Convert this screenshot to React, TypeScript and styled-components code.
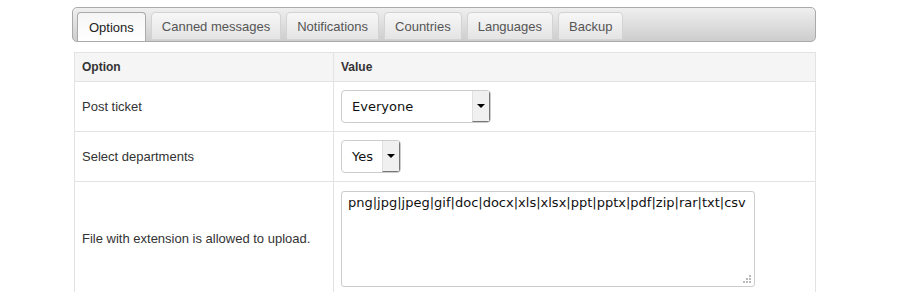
import { createGlobalStyle } from "styled-components";
import styled from "styled-components";

const GlobalStyle = createGlobalStyle`
  body {
    margin: 0;
    background: #fff;
    font-family: "Liberation Sans", Arial, sans-serif;
    color: #333;
  }
`;

const Page = styled.div`
  width: 744px;
  margin-left: 72px;
  padding-top: 7px;
`;

const TabBar = styled.ul`
  display: flex;
  gap: 5px;
  margin: 0;
  padding: 4px 0 0 4px;
  height: 29px;
  list-style: none;
  border: 1px solid #aaa;
  border-radius: 5px;
  background: linear-gradient(#efefef, #cdcdcd);
`;

const Tab = styled.li<{ $active?: boolean }>`
  height: ${(p) => (p.$active ? 29 : 28)}px;
  box-sizing: border-box;
  padding: 0 ${(p) => (p.$active ? 11 : 10)}px;
  display: flex;
  align-items: center;
  font-size: 13px;
  color: ${(p) => (p.$active ? "#222" : "#555")};
  border: 1px solid ${(p) => (p.$active ? "#aaa" : "#d3d3d3")};
  border-bottom: ${(p) => (p.$active ? "none" : "1px solid #d3d3d3")};
  border-radius: 4px 4px 0 0;
  background: ${(p) =>
    p.$active ? "linear-gradient(#f5f5f5, #fff)" : "linear-gradient(#f7f7f7, #e4e4e4)"};
`;

const Table = styled.table`
  width: 742px;
  margin: 10px 0 0 2px;
  border-collapse: collapse;
  font-size: 13px;
`;

const HeadCell = styled.th<{ $w?: number }>`
  text-align: left;
  font-size: 12px;
  font-weight: bold;
  color: #333;
  background: #f5f5f5;
  height: 28px;
  padding: 0 7px;
  border: 1px solid #e3e3e3;
  width: ${(p) => (p.$w ? `${p.$w}px` : "auto")};
`;

const Cell = styled.td<{ $h: number }>`
  height: ${(p) => p.$h}px;
  padding: 0 7px;
  border: 1px solid #e3e3e3;
  vertical-align: middle;
  color: #333;
`;

const Select = styled.div<{ $w: number; $h: number }>`
  display: flex;
  width: ${(p) => p.$w}px;
  height: ${(p) => p.$h}px;
  box-sizing: border-box;
  border: 1px solid #ccc;
  border-radius: 4px;
  overflow: hidden;
  background: #fff;
`;

const SelectText = styled.span`
  flex: 1;
  display: flex;
  align-items: center;
  padding-left: 10px;
  font-family: "DejaVu Sans", Verdana, sans-serif;
  font-size: 13px;
  color: #111;
`;

const Arrow = styled.span`
  width: 16px;
  display: flex;
  align-items: center;
  justify-content: center;
  background: #f0f0f0;
  border-left: 1px solid #e0e0e0;
  border-right: 1px solid #777;
  border-bottom: 1px solid #777;
  &::after {
    content: "";
    border-left: 4px solid transparent;
    border-right: 4px solid transparent;
    border-top: 4px solid #000;
  }
`;

const TextArea = styled.div`
  position: relative;
  width: 414px;
  height: 96px;
  box-sizing: border-box;
  border: 1px solid #ccc;
  border-radius: 3px;
  padding: 3px 6px;
  font-family: "DejaVu Sans", Verdana, sans-serif;
  font-size: 13px;
  color: #111;
`;

const Grip = styled.svg`
  position: absolute;
  right: 2px;
  bottom: 2px;
`;

export default function App() {
  const tabs = ["Options", "Canned messages", "Notifications", "Countries", "Languages", "Backup"];
  return (
    <Page>
      <GlobalStyle />
      <TabBar>
        {tabs.map((t, i) => (
          <Tab key={t} $active={i === 0}>
            {t}
          </Tab>
        ))}
      </TabBar>
      <Table>
        <thead>
          <tr>
            <HeadCell $w={244}>Option</HeadCell>
            <HeadCell>Value</HeadCell>
          </tr>
        </thead>
        <tbody>
          <tr>
            <Cell $h={49}>Post ticket</Cell>
            <Cell $h={49}>
              <Select $w={150} $h={33}>
                <SelectText>Everyone</SelectText>
                <Arrow />
              </Select>
            </Cell>
          </tr>
          <tr>
            <Cell $h={49}>Select departments</Cell>
            <Cell $h={49}>
              <Select $w={60} $h={33}>
                <SelectText>Yes</SelectText>
                <Arrow />
              </Select>
            </Cell>
          </tr>
          <tr>
            <Cell $h={113}>File with extension is allowed to upload.</Cell>
            <Cell $h={113}>
              <TextArea>
                png|jpg|jpeg|gif|doc|docx|xls|xlsx|ppt|pptx|pdf|zip|rar|txt|csv
                <Grip width="10" height="10" viewBox="0 0 10 10">
                  <rect x="7" y="1" width="2" height="2" fill="#bbb" />
                  <rect x="4" y="4" width="2" height="2" fill="#bbb" />
                  <rect x="7" y="4" width="2" height="2" fill="#bbb" />
                  <rect x="1" y="7" width="2" height="2" fill="#bbb" />
                  <rect x="4" y="7" width="2" height="2" fill="#bbb" />
                  <rect x="7" y="7" width="2" height="2" fill="#bbb" />
                </Grip>
              </TextArea>
            </Cell>
          </tr>
        </tbody>
      </Table>
    </Page>
  );
}
